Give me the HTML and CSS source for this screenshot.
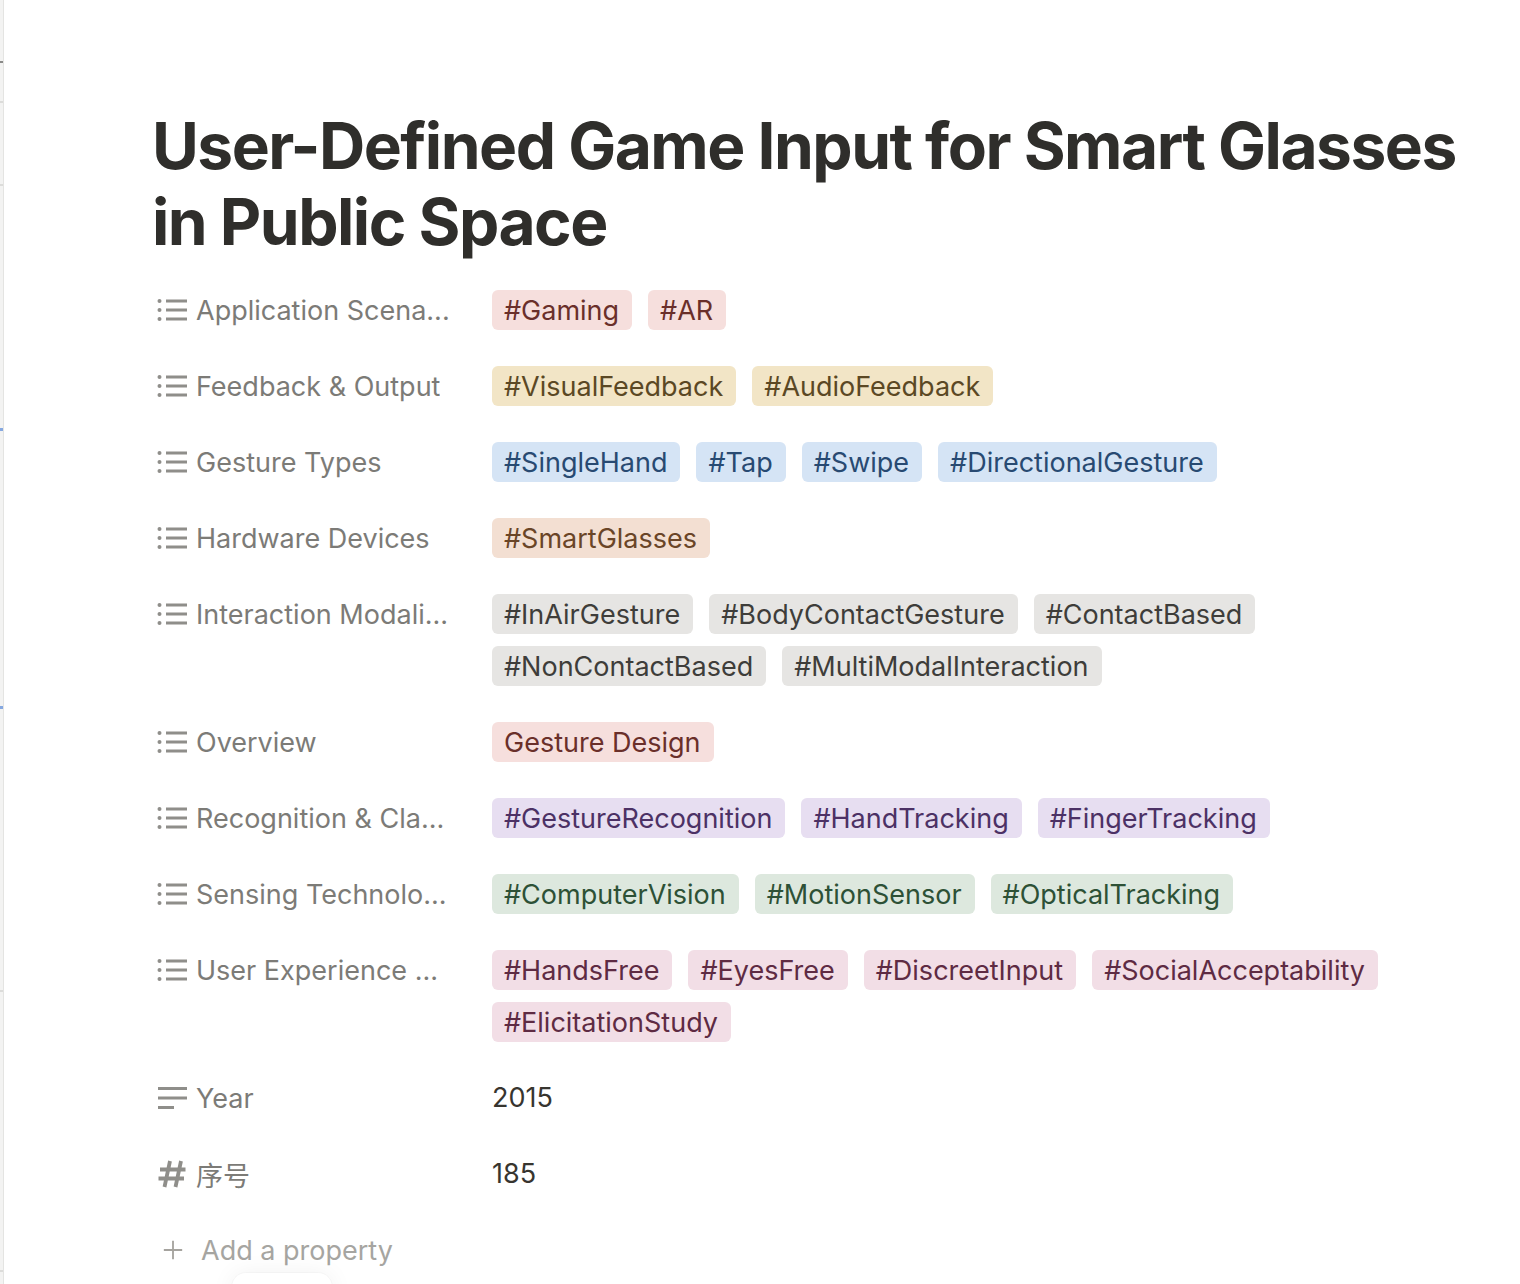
FILE: index.html
```html
<!DOCTYPE html>
<html lang="en">
<head>
<meta charset="utf-8">
<title>User-Defined Game Input for Smart Glasses in Public Space</title>
<link rel="stylesheet" href="styles.css">
</head>
<body>
<div class="app">
  <div class="edge">
    <span class="mark mark-dark m1"></span>
    <span class="mark m2"></span>
    <span class="mark m3"></span>
    <span class="mark mark-blue m4"></span>
    <span class="mark mark-blue m5"></span>
    <span class="mark m6"></span>
    <span class="mark m7"></span>
  </div>
  <main class="page">
    <h1 class="title">User-Defined Game Input for Smart Glasses in Public Space</h1>
    <div class="props">
      <div class="row">
        <div class="label"><svg class="icon" viewBox="0 0 30 24"><circle cx="2.5" cy="3" r="2"/><circle cx="2.5" cy="12" r="2"/><circle cx="2.5" cy="21" r="2"/><path d="M9 3H30M9 12H30M9 21H30"/></svg><span class="ltext">Application Scena...</span></div>
        <div class="value"><span class="tag red">#Gaming</span><span class="tag red">#AR</span></div>
      </div>
      <div class="row">
        <div class="label"><svg class="icon" viewBox="0 0 30 24"><circle cx="2.5" cy="3" r="2"/><circle cx="2.5" cy="12" r="2"/><circle cx="2.5" cy="21" r="2"/><path d="M9 3H30M9 12H30M9 21H30"/></svg><span class="ltext">Feedback &amp; Output</span></div>
        <div class="value"><span class="tag yellow">#VisualFeedback</span><span class="tag yellow">#AudioFeedback</span></div>
      </div>
      <div class="row">
        <div class="label"><svg class="icon" viewBox="0 0 30 24"><circle cx="2.5" cy="3" r="2"/><circle cx="2.5" cy="12" r="2"/><circle cx="2.5" cy="21" r="2"/><path d="M9 3H30M9 12H30M9 21H30"/></svg><span class="ltext">Gesture Types</span></div>
        <div class="value"><span class="tag blue">#SingleHand</span><span class="tag blue">#Tap</span><span class="tag blue">#Swipe</span><span class="tag blue">#DirectionalGesture</span></div>
      </div>
      <div class="row">
        <div class="label"><svg class="icon" viewBox="0 0 30 24"><circle cx="2.5" cy="3" r="2"/><circle cx="2.5" cy="12" r="2"/><circle cx="2.5" cy="21" r="2"/><path d="M9 3H30M9 12H30M9 21H30"/></svg><span class="ltext">Hardware Devices</span></div>
        <div class="value"><span class="tag brown">#SmartGlasses</span></div>
      </div>
      <div class="row">
        <div class="label"><svg class="icon" viewBox="0 0 30 24"><circle cx="2.5" cy="3" r="2"/><circle cx="2.5" cy="12" r="2"/><circle cx="2.5" cy="21" r="2"/><path d="M9 3H30M9 12H30M9 21H30"/></svg><span class="ltext">Interaction Modali...</span></div>
        <div class="value"><span class="tag gray">#InAirGesture</span><span class="tag gray">#BodyContactGesture</span><span class="tag gray">#ContactBased</span><span class="tag gray">#NonContactBased</span><span class="tag gray">#MultiModalInteraction</span></div>
      </div>
      <div class="row">
        <div class="label"><svg class="icon" viewBox="0 0 30 24"><circle cx="2.5" cy="3" r="2"/><circle cx="2.5" cy="12" r="2"/><circle cx="2.5" cy="21" r="2"/><path d="M9 3H30M9 12H30M9 21H30"/></svg><span class="ltext">Overview</span></div>
        <div class="value"><span class="tag red">Gesture Design</span></div>
      </div>
      <div class="row">
        <div class="label"><svg class="icon" viewBox="0 0 30 24"><circle cx="2.5" cy="3" r="2"/><circle cx="2.5" cy="12" r="2"/><circle cx="2.5" cy="21" r="2"/><path d="M9 3H30M9 12H30M9 21H30"/></svg><span class="ltext">Recognition &amp; Cla...</span></div>
        <div class="value"><span class="tag purple">#GestureRecognition</span><span class="tag purple">#HandTracking</span><span class="tag purple">#FingerTracking</span></div>
      </div>
      <div class="row">
        <div class="label"><svg class="icon" viewBox="0 0 30 24"><circle cx="2.5" cy="3" r="2"/><circle cx="2.5" cy="12" r="2"/><circle cx="2.5" cy="21" r="2"/><path d="M9 3H30M9 12H30M9 21H30"/></svg><span class="ltext">Sensing Technolo...</span></div>
        <div class="value"><span class="tag green">#ComputerVision</span><span class="tag green">#MotionSensor</span><span class="tag green">#OpticalTracking</span></div>
      </div>
      <div class="row">
        <div class="label"><svg class="icon" viewBox="0 0 30 24"><circle cx="2.5" cy="3" r="2"/><circle cx="2.5" cy="12" r="2"/><circle cx="2.5" cy="21" r="2"/><path d="M9 3H30M9 12H30M9 21H30"/></svg><span class="ltext">User Experience ...</span></div>
        <div class="value"><span class="tag pink">#HandsFree</span><span class="tag pink">#EyesFree</span><span class="tag pink">#DiscreetInput</span><span class="tag pink">#SocialAcceptability</span><span class="tag pink">#ElicitationStudy</span></div>
      </div>
      <div class="row">
        <div class="label"><svg class="icon" viewBox="0 0 30 24"><path d="M1 2.5H30M1 12H30M1 21.5H17"/></svg><span class="ltext">Year</span></div>
        <div class="value"><span class="plain">2015</span></div>
      </div>
      <div class="row">
        <div class="label"><svg class="icon hash" viewBox="0 0 30 30"><path d="M13 2L7.5 28M24 2L18.5 28M3 10.5H28.5M1.5 19.5H27"/></svg><span class="ltext">序号</span></div>
        <div class="value"><span class="plain">185</span></div>
      </div>
      <div class="row add">
        <div class="label"><svg class="icon plus" viewBox="0 0 24 24"><path d="M12 2V22M2 12H22"/></svg><span class="ltext">Add a property</span></div>
      </div>
    </div>
  </main>
  <div class="floating"></div>
</div>
</body>
</html>
```

FILE: styles.css
```css
* { box-sizing: border-box; }
html, body { margin: 0; padding: 0; background: #fff; }
body {
  font-family: Inter, "Noto Sans CJK SC", "Noto Sans", sans-serif;
  color: #32302c;
  height: 1284px;
  overflow: hidden;
}
.app {
  display: flex;
  height: 1284px;
  position: relative;
}
.edge {
  width: 4px;
  flex: none;
  background: #f3f3f2;
  border-right: 1px solid #e4e4e2;
  position: relative;
}
.mark {
  position: absolute;
  left: 0;
  width: 3px;
  height: 2px;
  background: #dcdcda;
}
.mark-dark { background: #8a8a88; }
.mark-blue { background: #86a8e0; height: 3px; }
.m1 { top: 61px; }
.m2 { top: 101px; }
.m3 { top: 184px; }
.m4 { top: 428px; }
.m5 { top: 706px; }
.m6 { top: 990px; }
.m7 { top: 1270px; }

.page {
  flex: 1;
  min-width: 0;
  padding: 108px 20px 0 148px;
}
.title {
  margin: 0 0 12px 0;
  font-size: 64px;
  line-height: 76px;
  font-weight: 700;
  color: #2f2e2b;
  letter-spacing: -1.5px;
}
.props {
  display: flex;
  flex-direction: column;
}
.row {
  display: flex;
  align-items: flex-start;
  padding: 18px 0;
}
.label {
  width: 340px;
  flex: none;
  display: flex;
  align-items: center;
  height: 40px;
  padding: 0 30px 0 5px;
  gap: 9px;
  color: #7c7b77;
  font-size: 27px;
  white-space: nowrap;
}
.ltext {
  overflow: hidden;
  text-overflow: ellipsis;
  min-width: 0;
}
.icon {
  width: 30px;
  height: 24px;
  flex: none;
  fill: #8f8e8a;
  stroke: #8f8e8a;
  stroke-width: 2.8;
}
.icon circle { stroke: none; }
.icon.hash {
  width: 30px;
  height: 30px;
  stroke-width: 3.8;
  fill: none;
}
.icon.plus {
  width: 22px;
  height: 22px;
  margin-left: 5px;
  margin-right: 8px;
  stroke: #a5a39e;
  stroke-width: 2;
  fill: none;
}
.add .label { color: #a6a5a1; }
.value {
  flex: 1;
  display: flex;
  flex-wrap: wrap;
  column-gap: 16px;
  row-gap: 12px;
  min-height: 40px;
  align-items: center;
}
.tag {
  display: inline-flex;
  align-items: center;
  height: 40px;
  padding: 0 13px 0 12px;
  border-radius: 6px;
  font-size: 27px;
  white-space: nowrap;
}
.plain {
  font-size: 27px;
  line-height: 40px;
  color: #37352f;
}
.red { background: #f6dfdd; color: #6a2f2a; }
.yellow { background: #f2e5c6; color: #5b4824; }
.blue { background: #d5e4f5; color: #284a72; }
.brown { background: #f3dfd2; color: #6a4527; }
.gray { background: #e6e5e3; color: #3e3d3a; }
.purple { background: #e7def1; color: #4c3165; }
.green { background: #dde8de; color: #2d5136; }
.pink { background: #f2dee6; color: #5e2b43; }

.floating {
  position: absolute;
  left: 232px;
  top: 1273px;
  width: 100px;
  height: 40px;
  border-radius: 14px;
  background: #fff;
  box-shadow: 0 0 24px rgba(0,0,0,0.06), 0 0 0 1px rgba(0,0,0,0.02);
}
```
